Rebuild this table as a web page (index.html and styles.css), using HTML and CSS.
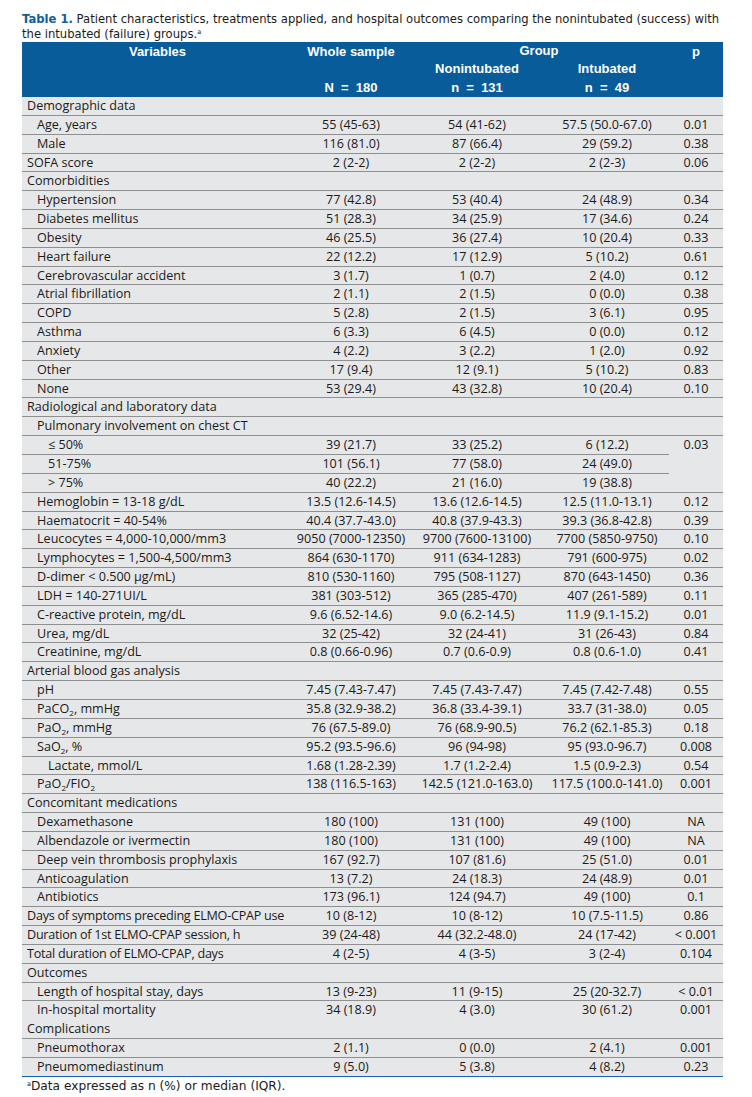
FILE: index.html
```html
<!DOCTYPE html>
<html>
<head>
<meta charset="utf-8">
<link rel="stylesheet" href="styles.css">
</head>
<body>
<div class="page">
<p class="caption"><span class="tlabel">Table 1.</span> Patient characteristics, treatments applied, and hospital outcomes comparing the nonintubated (success) with<br>the intubated (failure) groups.<sup>a</sup></p>
<table class="t">
<colgroup><col class="c1"><col class="c2"><col class="c3"><col class="c4"><col class="c5"></colgroup>
<thead>
<tr><th rowspan="3" class="top">Variables</th><th rowspan="2" class="top">Whole sample</th><th colspan="2">Group</th><th rowspan="3" class="top">p</th></tr>
<tr><th>Nonintubated</th><th>Intubated</th></tr>
<tr><th>N&nbsp;&nbsp;=&nbsp;&nbsp;180</th><th>n&nbsp;&nbsp;=&nbsp;&nbsp;131</th><th>n&nbsp;&nbsp;=&nbsp;&nbsp;49</th></tr>
</thead>
<tbody>
<tr><td class="l0">Demographic data</td><td></td><td></td><td></td><td></td></tr>
<tr><td class="l1">Age, years</td><td>55 (45-63)</td><td>54 (41-62)</td><td>57.5 (50.0-67.0)</td><td>0.01</td></tr>
<tr><td class="l1">Male</td><td>116 (81.0)</td><td>87 (66.4)</td><td>29 (59.2)</td><td>0.38</td></tr>
<tr><td class="l0">SOFA score</td><td>2 (2-2)</td><td>2 (2-2)</td><td>2 (2-3)</td><td>0.06</td></tr>
<tr><td class="l0">Comorbidities</td><td></td><td></td><td></td><td></td></tr>
<tr><td class="l1">Hypertension</td><td>77 (42.8)</td><td>53 (40.4)</td><td>24 (48.9)</td><td>0.34</td></tr>
<tr><td class="l1">Diabetes mellitus</td><td>51 (28.3)</td><td>34 (25.9)</td><td>17 (34.6)</td><td>0.24</td></tr>
<tr><td class="l1">Obesity</td><td>46 (25.5)</td><td>36 (27.4)</td><td>10 (20.4)</td><td>0.33</td></tr>
<tr><td class="l1">Heart failure</td><td>22 (12.2)</td><td>17 (12.9)</td><td>5 (10.2)</td><td>0.61</td></tr>
<tr><td class="l1">Cerebrovascular accident</td><td>3 (1.7)</td><td>1 (0.7)</td><td>2 (4.0)</td><td>0.12</td></tr>
<tr><td class="l1">Atrial fibrillation</td><td>2 (1.1)</td><td>2 (1.5)</td><td>0 (0.0)</td><td>0.38</td></tr>
<tr><td class="l1">COPD</td><td>5 (2.8)</td><td>2 (1.5)</td><td>3 (6.1)</td><td>0.95</td></tr>
<tr><td class="l1">Asthma</td><td>6 (3.3)</td><td>6 (4.5)</td><td>0 (0.0)</td><td>0.12</td></tr>
<tr><td class="l1">Anxiety</td><td>4 (2.2)</td><td>3 (2.2)</td><td>1 (2.0)</td><td>0.92</td></tr>
<tr><td class="l1">Other</td><td>17 (9.4)</td><td>12 (9.1)</td><td>5 (10.2)</td><td>0.83</td></tr>
<tr><td class="l1">None</td><td>53 (29.4)</td><td>43 (32.8)</td><td>10 (20.4)</td><td>0.10</td></tr>
<tr><td class="l0">Radiological and laboratory data</td><td></td><td></td><td></td><td></td></tr>
<tr><td class="l1">Pulmonary involvement on chest CT</td><td></td><td></td><td></td><td></td></tr>
<tr><td class="l2">≤ 50%</td><td>39 (21.7)</td><td>33 (25.2)</td><td>6 (12.2)</td><td rowspan="3" class="top">0.03</td></tr>
<tr><td class="l2">51-75%</td><td>101 (56.1)</td><td>77 (58.0)</td><td>24 (49.0)</td></tr>
<tr><td class="l2">&gt; 75%</td><td>40 (22.2)</td><td>21 (16.0)</td><td>19 (38.8)</td></tr>
<tr><td class="l1">Hemoglobin = 13-18 g/dL</td><td>13.5 (12.6-14.5)</td><td>13.6 (12.6-14.5)</td><td>12.5 (11.0-13.1)</td><td>0.12</td></tr>
<tr><td class="l1">Haematocrit = 40-54%</td><td>40.4 (37.7-43.0)</td><td>40.8 (37.9-43.3)</td><td>39.3 (36.8-42.8)</td><td>0.39</td></tr>
<tr><td class="l1">Leucocytes = 4,000-10,000/mm3</td><td>9050 (7000-12350)</td><td>9700 (7600-13100)</td><td>7700 (5850-9750)</td><td>0.10</td></tr>
<tr><td class="l1">Lymphocytes = 1,500-4,500/mm3</td><td>864 (630-1170)</td><td>911 (634-1283)</td><td>791 (600-975)</td><td>0.02</td></tr>
<tr><td class="l1">D-dimer &lt; 0.500 µg/mL)</td><td>810 (530-1160)</td><td>795 (508-1127)</td><td>870 (643-1450)</td><td>0.36</td></tr>
<tr><td class="l1">LDH = 140-271UI/L</td><td>381 (303-512)</td><td>365 (285-470)</td><td>407 (261-589)</td><td>0.11</td></tr>
<tr><td class="l1">C-reactive protein, mg/dL</td><td>9.6 (6.52-14.6)</td><td>9.0 (6.2-14.5)</td><td>11.9 (9.1-15.2)</td><td>0.01</td></tr>
<tr><td class="l1">Urea, mg/dL</td><td>32 (25-42)</td><td>32 (24-41)</td><td>31 (26-43)</td><td>0.84</td></tr>
<tr><td class="l1">Creatinine, mg/dL</td><td>0.8 (0.66-0.96)</td><td>0.7 (0.6-0.9)</td><td>0.8 (0.6-1.0)</td><td>0.41</td></tr>
<tr><td class="l0">Arterial blood gas analysis</td><td></td><td></td><td></td><td></td></tr>
<tr><td class="l1">pH</td><td>7.45 (7.43-7.47)</td><td>7.45 (7.43-7.47)</td><td>7.45 (7.42-7.48)</td><td>0.55</td></tr>
<tr><td class="l1">PaCO<sub>2</sub>, mmHg</td><td>35.8 (32.9-38.2)</td><td>36.8 (33.4-39.1)</td><td>33.7 (31-38.0)</td><td>0.05</td></tr>
<tr><td class="l1">PaO<sub>2</sub>, mmHg</td><td>76 (67.5-89.0)</td><td>76 (68.9-90.5)</td><td>76.2 (62.1-85.3)</td><td>0.18</td></tr>
<tr><td class="l1">SaO<sub>2</sub>, %</td><td>95.2 (93.5-96.6)</td><td>96 (94-98)</td><td>95 (93.0-96.7)</td><td>0.008</td></tr>
<tr><td class="l2">Lactate, mmol/L</td><td>1.68 (1.28-2.39)</td><td>1.7 (1.2-2.4)</td><td>1.5 (0.9-2.3)</td><td>0.54</td></tr>
<tr><td class="l1">PaO<sub>2</sub>/FIO<sub>2</sub></td><td>138 (116.5-163)</td><td>142.5 (121.0-163.0)</td><td>117.5 (100.0-141.0)</td><td>0.001</td></tr>
<tr><td class="l0">Concomitant medications</td><td></td><td></td><td></td><td></td></tr>
<tr><td class="l1">Dexamethasone</td><td>180 (100)</td><td>131 (100)</td><td>49 (100)</td><td>NA</td></tr>
<tr><td class="l1">Albendazole or ivermectin</td><td>180 (100)</td><td>131 (100)</td><td>49 (100)</td><td>NA</td></tr>
<tr><td class="l1">Deep vein thrombosis prophylaxis</td><td>167 (92.7)</td><td>107 (81.6)</td><td>25 (51.0)</td><td>0.01</td></tr>
<tr><td class="l1">Anticoagulation</td><td>13 (7.2)</td><td>24 (18.3)</td><td>24 (48.9)</td><td>0.01</td></tr>
<tr><td class="l1">Antibiotics</td><td>173 (96.1)</td><td>124 (94.7)</td><td>49 (100)</td><td>0.1</td></tr>
<tr><td class="l0 tight">Days of symptoms preceding ELMO-CPAP use</td><td>10 (8-12)</td><td>10 (8-12)</td><td>10 (7.5-11.5)</td><td>0.86</td></tr>
<tr><td class="l0 tight">Duration of 1st ELMO-CPAP session, h</td><td>39 (24-48)</td><td>44 (32.2-48.0)</td><td>24 (17-42)</td><td>&lt; 0.001</td></tr>
<tr><td class="l0 tight">Total duration of ELMO-CPAP, days</td><td>4 (2-5)</td><td>4 (3-5)</td><td>3 (2-4)</td><td>0.104</td></tr>
<tr><td class="l0">Outcomes</td><td></td><td></td><td></td><td></td></tr>
<tr><td class="l1">Length of hospital stay, days</td><td>13 (9-23)</td><td>11 (9-15)</td><td>25 (20-32.7)</td><td>&lt; 0.01</td></tr>
<tr class="nb"><td class="l1">In-hospital mortality</td><td>34 (18.9)</td><td>4 (3.0)</td><td>30 (61.2)</td><td>0.001</td></tr>
<tr><td class="l0">Complications</td><td></td><td></td><td></td><td></td></tr>
<tr><td class="l1">Pneumothorax</td><td>2 (1.1)</td><td>0 (0.0)</td><td>2 (4.1)</td><td>0.001</td></tr>
<tr class="last"><td class="l1">Pneumomediastinum</td><td>9 (5.0)</td><td>5 (3.8)</td><td>4 (8.2)</td><td>0.23</td></tr>
</tbody>
</table>
<p class="foot"><sup>a</sup>Data expressed as n (%) or median (IQR).</p>
</div>
</body>
</html>
```
FILE: styles.css
```css
html, body {
  margin: 0;
  padding: 0;
  background: #ffffff;
}
.page {
  padding: 12px 0 0 22px;
  width: 701px;
}
.caption {
  margin: 0;
  font-family: "DejaVu Sans", Verdana, sans-serif;
  font-size: 11.6px;
  line-height: 15px;
  color: #1a1a1a;
  white-space: nowrap;
  height: 30px;
}
.caption sup, .foot sup {
  font-size: 6.5px;
  vertical-align: 4px;
  line-height: 0;
}
.tlabel {
  color: #0c5e9c;
  font-weight: bold;
}
.t {
  border-collapse: separate;
  border-spacing: 0;
  table-layout: fixed;
  width: 701px;
  background: #e6e7e8;
  font-family: "Open Sans", sans-serif;
  font-size: 12.6px;
  color: #1a1a1a;
}
.c1 { width: 271px; }
.c2 { width: 116px; }
.c3 { width: 136px; }
.c4 { width: 124px; }
.c5 { width: 54px; }
.t th {
  background: #085c99;
  color: #ffffff;
  font-family: "Liberation Sans", Arial, sans-serif;
  font-weight: bold;
  font-size: 13px;
  line-height: 18.33px;
  height: 18.33px;
  padding: 0;
  text-align: center;
  white-space: nowrap;
}
.t th.top {
  padding-top: 1px;
}
.t .top {
  vertical-align: top;
}
.t td {
  height: 16.85px;
  line-height: 16.85px;
  padding: 1px 2px 0;
  border-bottom: 1px solid #8f8f8f;
  text-align: center;
  white-space: nowrap;
}
.t td.l0 { text-align: left; padding-left: 5px; }
.t td.l1 { text-align: left; padding-left: 15px; }
.t td.l2 { text-align: left; padding-left: 26px; }
.t td.tight { letter-spacing: -0.25px; }
.t tr.nb td { border-bottom-color: transparent; }
.t tr.last td { border-bottom: 1px solid #1565a8; }
.t sub {
  font-size: 8px;
  line-height: 0;
  vertical-align: -3px;
}
.foot {
  margin: 0;
  padding: 2px 0 0 5px;
  font-family: "DejaVu Sans", Verdana, sans-serif;
  font-size: 12.2px;
  line-height: 15px;
  color: #1a1a1a;
}
```
